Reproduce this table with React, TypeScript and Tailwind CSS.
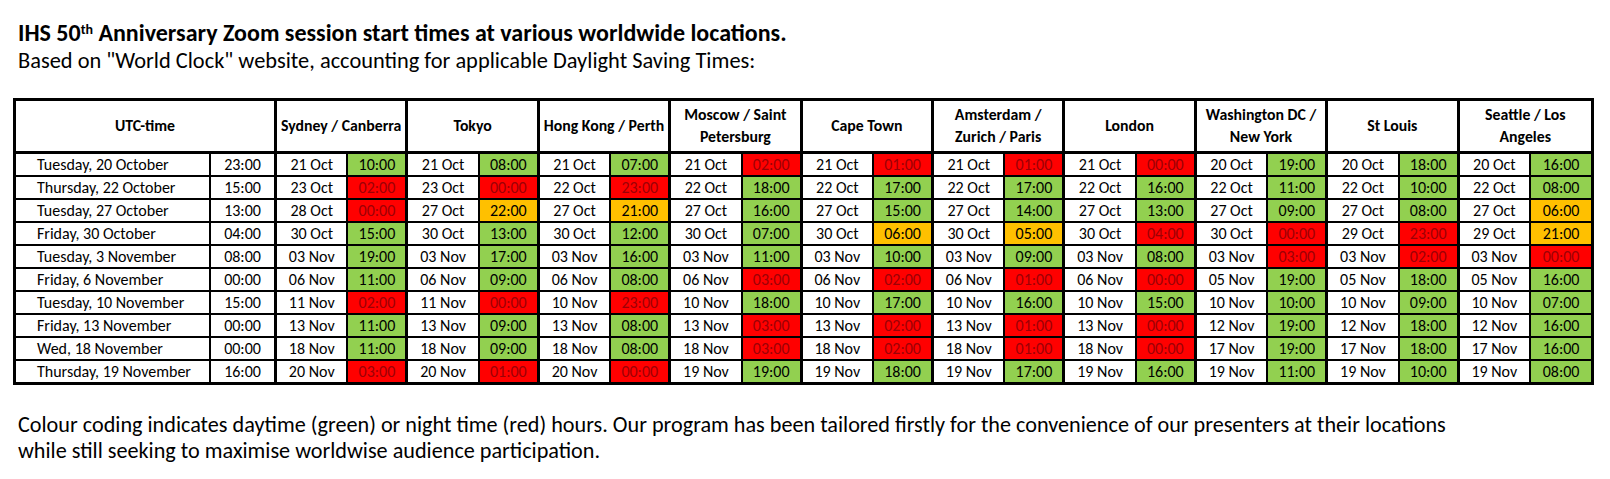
type Tone = "g" | "r" | "o"
type Cell = [string, string, Tone]
type Row = { day: string; utc: string; cells: Cell[] }

const cities = [
  ["Sydney / Canberra"],
  ["Tokyo"],
  ["Hong Kong / Perth"],
  ["Moscow / Saint", "Petersburg"],
  ["Cape Town"],
  ["Amsterdam /", "Zurich / Paris"],
  ["London"],
  ["Washington DC /", "New York"],
  ["St Louis"],
  ["Seattle / Los", "Angeles"],
]

// times per city in the same order as the header
function r(day: string, utc: string, list: string): Row {
  const cells = list.split(";").map((s) => {
    const [d, m, t, c] = s.trim().split(" ")
    return [d + " " + m, t, c as Tone] as Cell
  })
  return { day, utc, cells }
}

const rows: Row[] = [
  r("Tuesday, 20 October", "23:00", "21 Oct 10:00 g; 21 Oct 08:00 g; 21 Oct 07:00 g; 21 Oct 02:00 r; 21 Oct 01:00 r; 21 Oct 01:00 r; 21 Oct 00:00 r; 20 Oct 19:00 g; 20 Oct 18:00 g; 20 Oct 16:00 g"),
  r("Thursday, 22 October", "15:00", "23 Oct 02:00 r; 23 Oct 00:00 r; 22 Oct 23:00 r; 22 Oct 18:00 g; 22 Oct 17:00 g; 22 Oct 17:00 g; 22 Oct 16:00 g; 22 Oct 11:00 g; 22 Oct 10:00 g; 22 Oct 08:00 g"),
  r("Tuesday, 27 October", "13:00", "28 Oct 00:00 r; 27 Oct 22:00 o; 27 Oct 21:00 o; 27 Oct 16:00 g; 27 Oct 15:00 g; 27 Oct 14:00 g; 27 Oct 13:00 g; 27 Oct 09:00 g; 27 Oct 08:00 g; 27 Oct 06:00 o"),
  r("Friday, 30 October", "04:00", "30 Oct 15:00 g; 30 Oct 13:00 g; 30 Oct 12:00 g; 30 Oct 07:00 g; 30 Oct 06:00 o; 30 Oct 05:00 o; 30 Oct 04:00 r; 30 Oct 00:00 r; 29 Oct 23:00 r; 29 Oct 21:00 o"),
  r("Tuesday, 3 November", "08:00", "03 Nov 19:00 g; 03 Nov 17:00 g; 03 Nov 16:00 g; 03 Nov 11:00 g; 03 Nov 10:00 g; 03 Nov 09:00 g; 03 Nov 08:00 g; 03 Nov 03:00 r; 03 Nov 02:00 r; 03 Nov 00:00 r"),
  r("Friday, 6 November", "00:00", "06 Nov 11:00 g; 06 Nov 09:00 g; 06 Nov 08:00 g; 06 Nov 03:00 r; 06 Nov 02:00 r; 06 Nov 01:00 r; 06 Nov 00:00 r; 05 Nov 19:00 g; 05 Nov 18:00 g; 05 Nov 16:00 g"),
  r("Tuesday, 10 November", "15:00", "11 Nov 02:00 r; 11 Nov 00:00 r; 10 Nov 23:00 r; 10 Nov 18:00 g; 10 Nov 17:00 g; 10 Nov 16:00 g; 10 Nov 15:00 g; 10 Nov 10:00 g; 10 Nov 09:00 g; 10 Nov 07:00 g"),
  r("Friday, 13 November", "00:00", "13 Nov 11:00 g; 13 Nov 09:00 g; 13 Nov 08:00 g; 13 Nov 03:00 r; 13 Nov 02:00 r; 13 Nov 01:00 r; 13 Nov 00:00 r; 12 Nov 19:00 g; 12 Nov 18:00 g; 12 Nov 16:00 g"),
  r("Wed, 18 November", "00:00", "18 Nov 11:00 g; 18 Nov 09:00 g; 18 Nov 08:00 g; 18 Nov 03:00 r; 18 Nov 02:00 r; 18 Nov 01:00 r; 18 Nov 00:00 r; 17 Nov 19:00 g; 17 Nov 18:00 g; 17 Nov 16:00 g"),
  r("Thursday, 19 November", "16:00", "20 Nov 03:00 r; 20 Nov 01:00 r; 20 Nov 00:00 r; 19 Nov 19:00 g; 19 Nov 18:00 g; 19 Nov 17:00 g; 19 Nov 16:00 g; 19 Nov 11:00 g; 19 Nov 10:00 g; 19 Nov 08:00 g"),
]

const tone: Record<Tone, string> = {
  g: "bg-[#92d050] text-black",
  r: "bg-[#ff0000] text-[#9c0006]",
  o: "bg-[#ffc000] text-black",
}

export default function App() {
  return (
    <div className="h-[479px] w-[1610px] overflow-hidden bg-white text-black [font-family:Carlito,Lato,'Open_Sans',sans-serif]">
      <div className="h-[98px] pl-[18px] pt-[19px]">
        <p className="text-[24px] font-bold leading-[28px]">
          IHS 50<sup className="text-[14px]">th</sup> Anniversary Zoom session start times at various worldwide locations.
        </p>
        <p className="text-[22.4px] leading-[28px]">
          Based on "World Clock" website, accounting for applicable Daylight Saving Times:
        </p>
      </div>

      <div className="ml-[13px] grid w-[1581px] grid-cols-[195px_66px_repeat(10,71.5fr_59.9fr)] border-[3px] border-black text-[16px]">
        <div className="col-span-2 flex h-[53px] items-center justify-center border-r-[3px] border-b-[3px] border-black text-[15.8px] font-bold leading-[22px]">
          UTC-time
        </div>
        {cities.map((lines, i) => (
          <div
            key={i}
            className={`col-span-2 flex h-[53px] flex-col items-center justify-center border-b-[3px] border-black text-center text-[15.8px] font-bold leading-[22px] ${i < cities.length - 1 ? "border-r-[3px]" : ""}`}
          >
            {lines.map((l) => (
              <span key={l} className="whitespace-nowrap">{l}</span>
            ))}
          </div>
        ))}

        {rows.map((row, ri) => {
          const last = ri === rows.length - 1
          const rowCls = last ? "h-[21px]" : "h-[23px] border-b-2"
          return [
            <div key={`d${ri}`} className={`flex items-center border-r-2 border-black pl-[21px] ${rowCls}`}>
              {row.day}
            </div>,
            <div key={`u${ri}`} className={`flex items-center justify-center border-r-[3px] border-black ${rowCls}`}>
              {row.utc}
            </div>,
            ...row.cells.flatMap(([date, time, c], ci) => [
              <div key={`c${ri}-${ci}`} className={`flex items-center justify-center border-r-2 border-black ${rowCls}`}>
                {date}
              </div>,
              <div
                key={`t${ri}-${ci}`}
                className={`flex items-center justify-center border-black ${tone[c]} ${rowCls} ${ci < row.cells.length - 1 ? "border-r-[3px]" : ""}`}
              >
                {time}
              </div>,
            ]),
          ]
        })}
      </div>

      <div className="mt-[27px] pl-[18px] text-[22.2px] leading-[26px]">
        <p>
          Colour coding indicates daytime (green) or night time (red) hours. Our program has been tailored firstly for the convenience of our presenters at their locations
        </p>
        <p>while still seeking to maximise worldwise audience participation.</p>
      </div>
    </div>
  )
}
